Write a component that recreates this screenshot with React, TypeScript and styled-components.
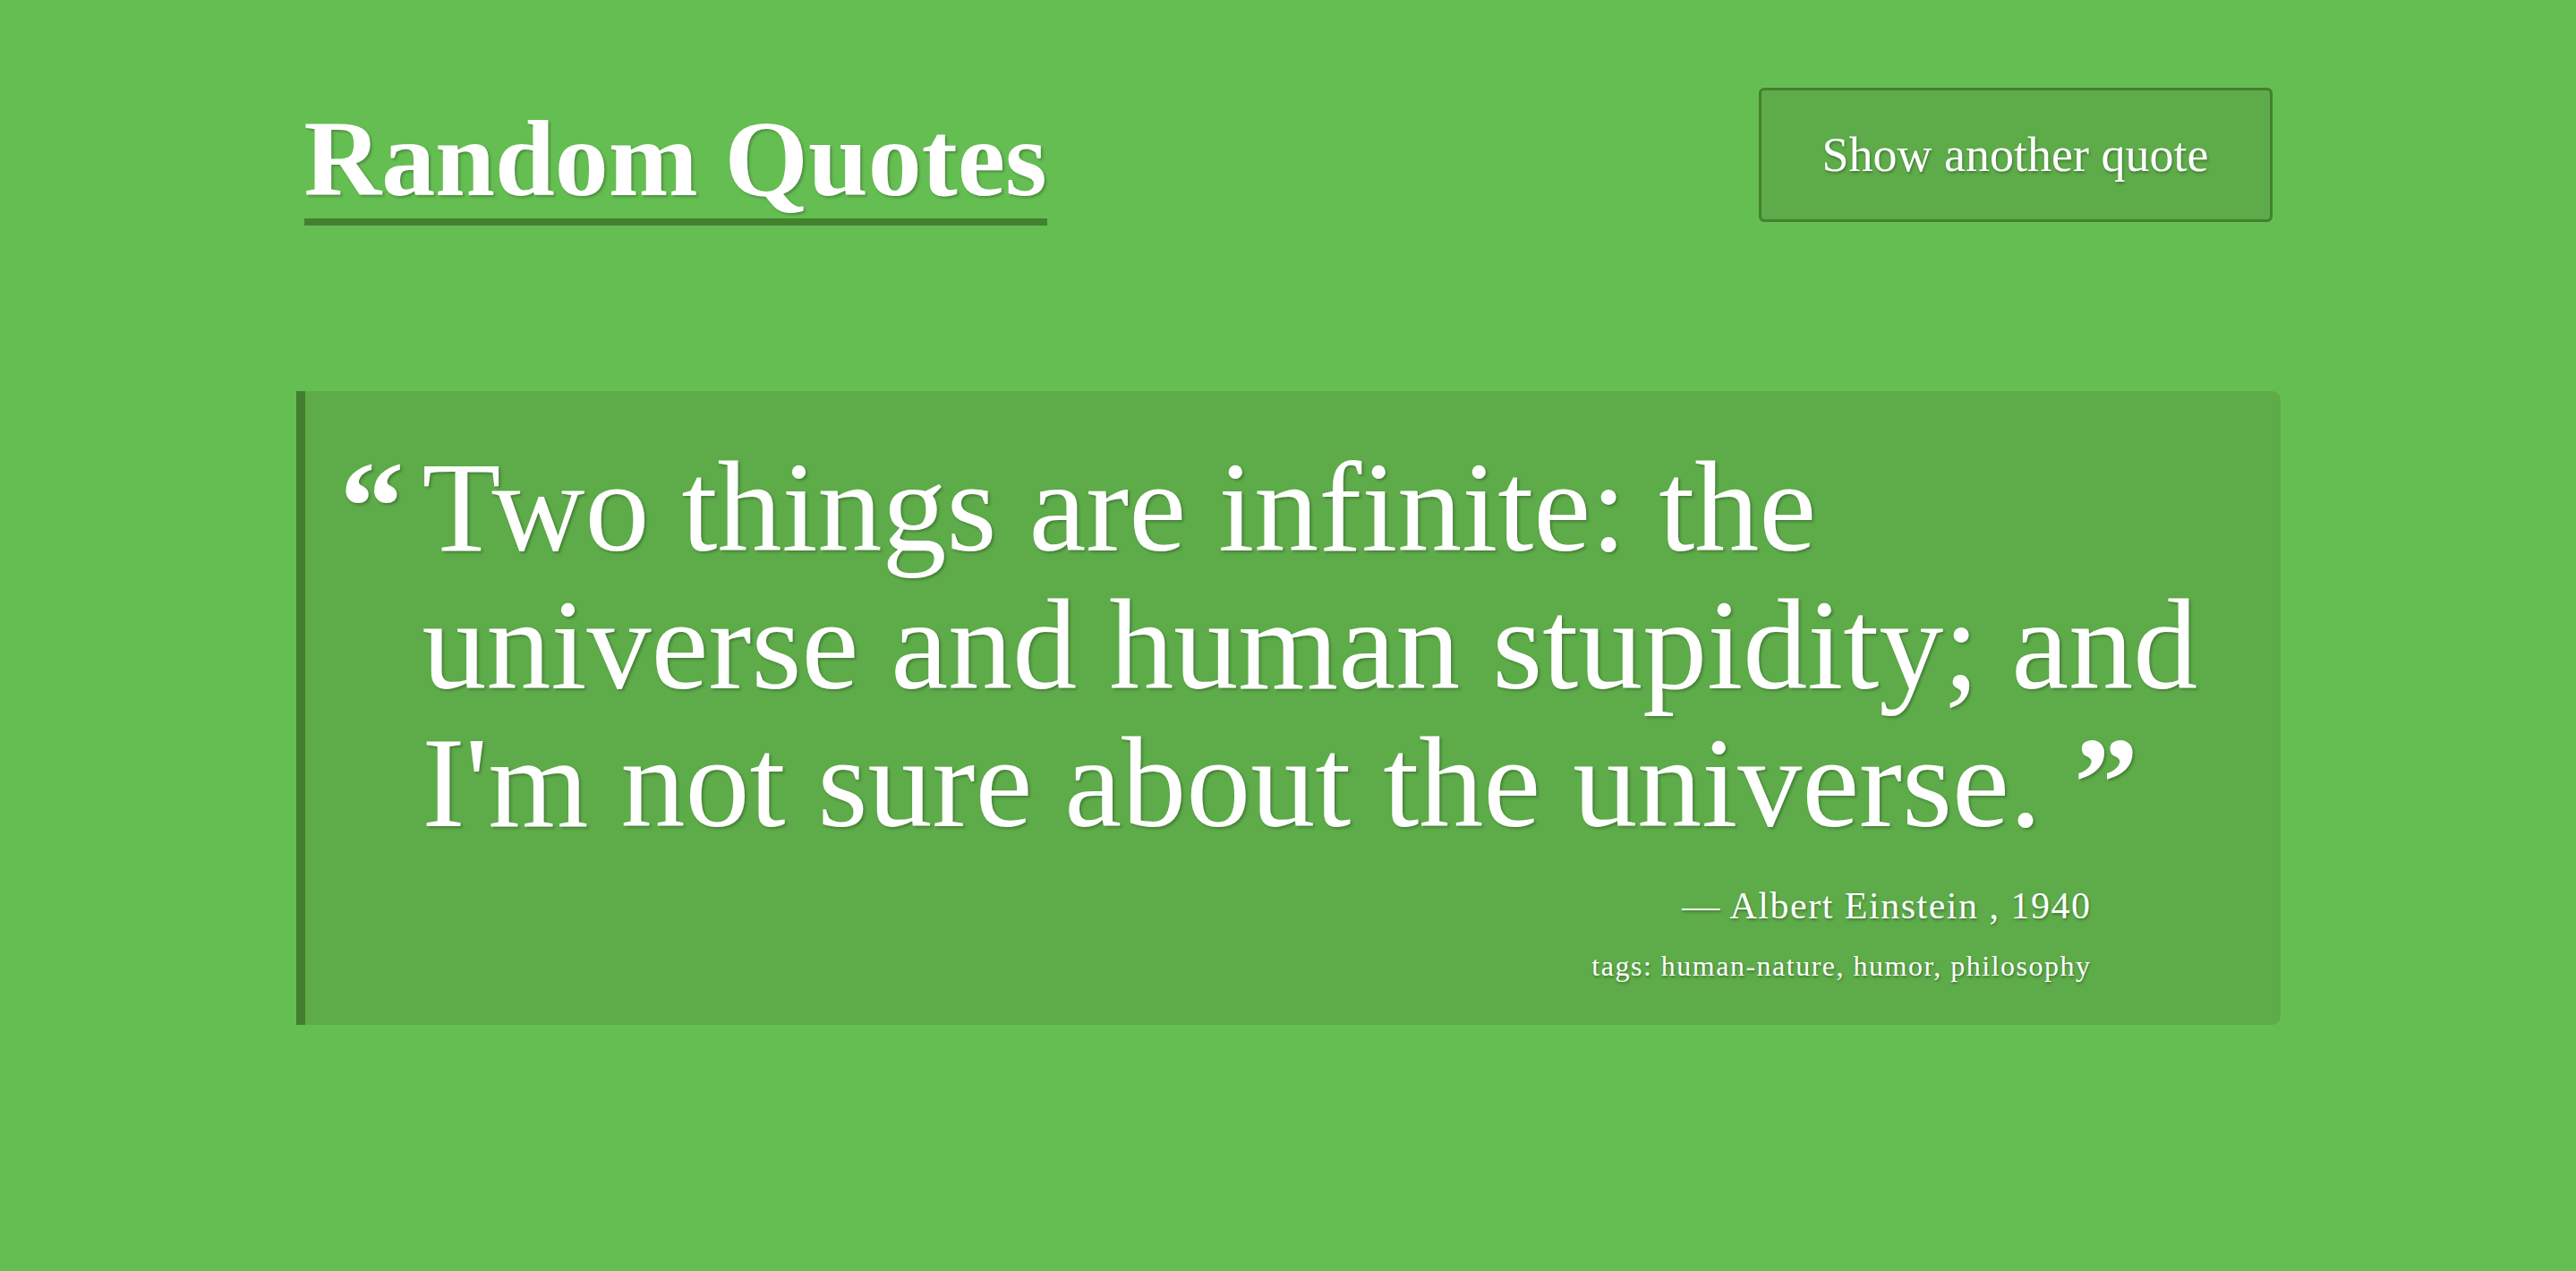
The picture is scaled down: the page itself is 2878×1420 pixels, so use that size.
import React from "react";
import styled, { createGlobalStyle } from "styled-components";

const GlobalStyle = createGlobalStyle`
  html, body {
    margin: 0;
    padding: 0;
    background: #65be52;
  }
  body {
    font-family: "Liberation Serif", "Times New Roman", serif;
    color: #ffffff;
    min-height: 1420px;
  }
`;

const Page = styled.div`
  width: 2217px;
  margin: 0 auto;
  padding-top: 98px;
  display: flex;
  flex-direction: column;
`;

const Header = styled.header`
  display: flex;
  justify-content: space-between;
  align-items: flex-start;
  padding: 0 9px;
`;

const Title = styled.h1`
  margin: 20px 0 0 0;
  font-family: "Liberation Serif", serif;
  font-weight: 700;
  font-size: 120px;
  line-height: 120px;
  padding-bottom: 6px;
  border-bottom: 8px solid #43812f;
  color: #ffffff;
  text-shadow: 2px 2px 3px rgba(0, 0, 0, 0.25);
`;

const Button = styled.button`
  box-sizing: border-box;
  width: 574px;
  height: 150px;
  background: #5dab49;
  border: 3px solid #43812f;
  border-radius: 6px;
  color: #ffffff;
  font-family: "Liberation Serif", serif;
  font-size: 54px;
  line-height: 1;
  text-shadow: 1px 2px 3px rgba(0, 0, 0, 0.3);
  cursor: pointer;
  padding: 0;
`;

const Card = styled.section`
  margin-top: 185px;
  background: #5dab49;
  border-left: 10px solid #427d30;
  border-radius: 0 10px 10px 0;
  padding: 53px 56px 46px 39px;
  display: flex;
  flex-direction: column;
`;

const QuoteRow = styled.div`
  display: flex;
  align-items: flex-start;
`;

const OpenMark = styled.span`
  font-family: "Liberation Serif", serif;
  font-weight: 700;
  font-size: 144px;
  line-height: 144px;
  margin-top: 4px;
  margin-right: 20px;
  text-shadow: 2px 2px 3px rgba(0, 0, 0, 0.25);
`;

const QuoteText = styled.blockquote`
  margin: 0;
  flex: 1;
  font-family: "Liberation Serif", serif;
  font-size: 144px;
  line-height: 154px;
  font-weight: 400;
  text-shadow: 2px 2px 3px rgba(0, 0, 0, 0.25);
`;

const CloseMark = styled.span`
  font-weight: 700;
`;

const Meta = styled.footer`
  align-self: flex-end;
  margin-right: 155px;
  margin-top: 35px;
  display: flex;
  flex-direction: column;
  align-items: flex-end;
  gap: 22px;
`;

const Author = styled.div`
  font-size: 42px;
  line-height: 50px;
  letter-spacing: 1.5px;
  text-shadow: 1px 2px 3px rgba(0, 0, 0, 0.3);
`;

const Tags = styled.div`
  font-size: 32px;
  line-height: 40px;
  letter-spacing: 1.5px;
  text-shadow: 1px 2px 3px rgba(0, 0, 0, 0.3);
`;

export default function App() {
  return (
    <>
      <GlobalStyle />
      <Page>
        <Header>
          <Title>Random Quotes</Title>
          <Button>Show another quote</Button>
        </Header>
        <Card>
          <QuoteRow>
            <OpenMark>“</OpenMark>
            <QuoteText>
              Two things are infinite: the universe and human stupidity; and
              I'm not sure about the universe. <CloseMark>”</CloseMark>
            </QuoteText>
          </QuoteRow>
          <Meta>
            <Author>— Albert Einstein , 1940</Author>
            <Tags>tags: human-nature, humor, philosophy</Tags>
          </Meta>
        </Card>
      </Page>
    </>
  );
}
